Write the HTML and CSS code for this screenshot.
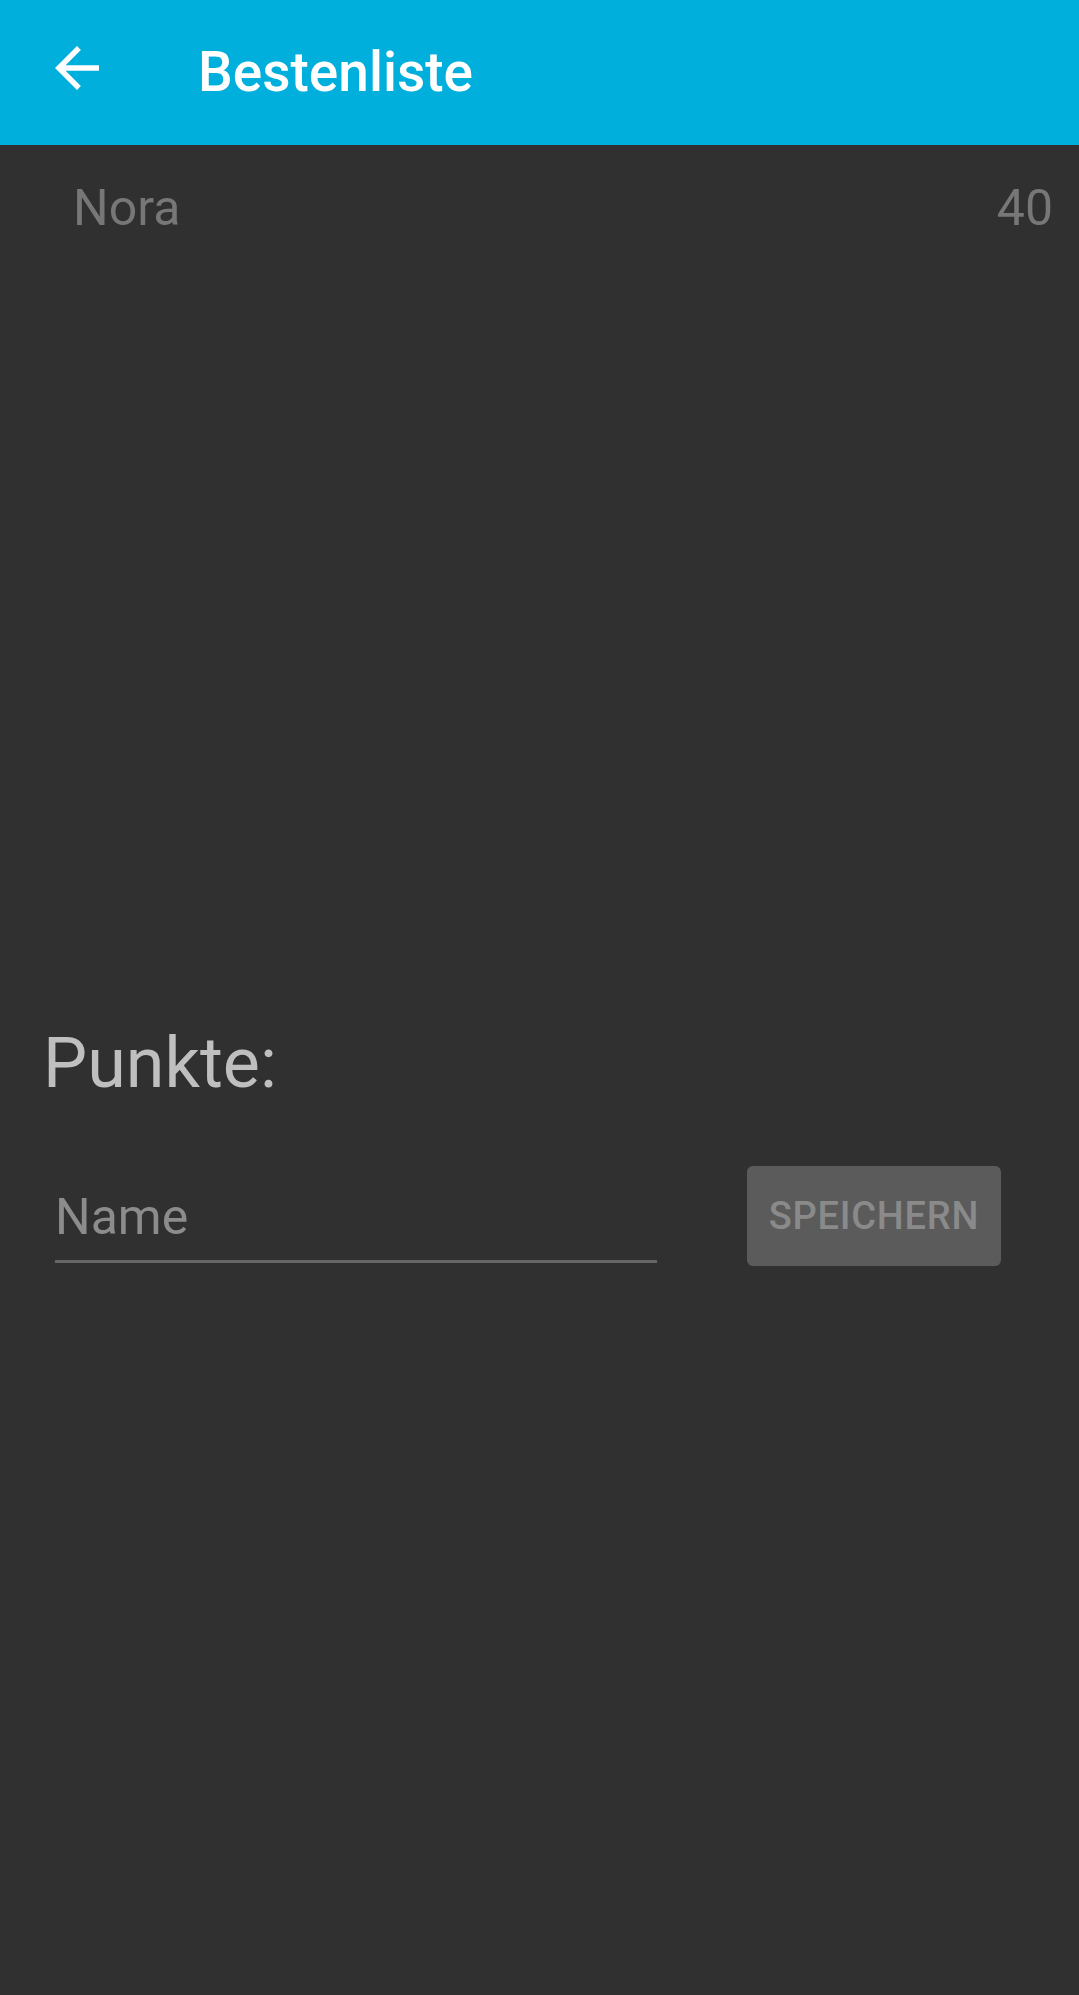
FILE: index.html
```html
<!DOCTYPE html>
<html lang="de">
<head>
<meta charset="utf-8">
<title>Bestenliste</title>
<link rel="stylesheet" href="styles.css">
</head>
<body>
<div class="app">
  <header class="toolbar">
    <button class="back" aria-label="Zurück">
      <svg viewBox="0 0 24 24" width="66" height="66"><path fill="#fff" d="M20 11H7.83l5.59-5.59L12 4l-8 8 8 8 1.41-1.41L7.83 13H20v-2z"/></svg>
    </button>
    <h1 class="title">Bestenliste</h1>
  </header>
  <main class="content">
    <section class="list">
      <div class="row">
        <span class="name">Nora</span>
        <span class="score">40</span>
      </div>
    </section>
    <section class="form">
      <div class="points">Punkte:</div>
      <div class="entry">
        <div class="field"><span class="hint">Name</span></div>
        <button class="save">SPEICHERN</button>
      </div>
    </section>
  </main>
</div>
</body>
</html>
```
FILE: styles.css
```css
html, body {
  margin: 0;
  padding: 0;
  background: #303030;
}
body {
  font-family: Roboto, "Noto Sans", "Liberation Sans", sans-serif;
}
.app {
  width: 1079px;
  min-height: 1995px;
  background: #303030;
}
.toolbar {
  height: 145px;
  background: #00afdb;
  display: flex;
  align-items: center;
}
.back {
  margin: 0 0 9px 44px;
  width: 66px;
  height: 66px;
  padding: 0;
  border: 0;
  background: transparent;
  display: flex;
}
.title {
  margin: 0 0 0 88px;
  font-size: 55px;
  font-weight: 500;
  color: #ffffff;
  line-height: 1.172;
}
.list {
  height: 877px;
}
.row {
  display: flex;
  justify-content: space-between;
  padding: 34px 26px 0 73px;
  font-size: 50px;
  line-height: 1.172;
  color: #777777;
}
.form {
  padding-left: 43px;
}
.points {
  font-size: 70px;
  line-height: 1.172;
  color: #bfbfbf;
}
.entry {
  display: flex;
  align-items: flex-start;
  margin-top: 62px;
}
.field {
  margin-left: 12px;
  width: 602px;
  padding-top: 22px;
  padding-bottom: 13px;
  border-bottom: 3px solid #666666;
}
.hint {
  display: block;
  font-size: 50px;
  line-height: 1.172;
  color: #8c8c8c;
}
.save {
  margin-left: 90px;
  width: 254px;
  height: 100px;
  border: 0;
  border-radius: 6px;
  background: #5b5b5c;
  color: #8a8a8a;
  font-family: Roboto, "Noto Sans", "Liberation Sans", sans-serif;
  font-size: 38px;
  font-weight: 500;
  letter-spacing: 0.02em;
  padding: 0;
}
```
